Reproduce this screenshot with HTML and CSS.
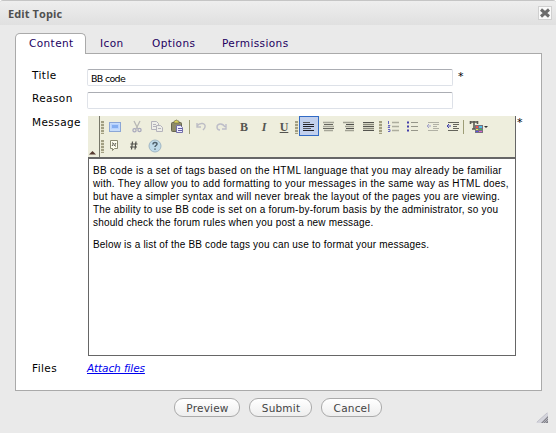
FILE: index.html
```html
<!DOCTYPE html>
<html lang="en">
<head>
<meta charset="utf-8">
<title>Edit Topic</title>
<link rel="stylesheet" href="styles.css">
</head>
<body>
<main class="dialog">
  <header class="titlebar">
    <h1>Edit Topic</h1>
    <button class="close" aria-label="Close"><svg width="12" height="12" viewBox="0 0 12 12"><path d="M2 2.5l8 7M10 2.5l-8 7" stroke="#6c6c6c" stroke-width="3"/></svg></button>
  </header>
  <nav class="tabs">
    <a class="tab active">Content</a><a class="tab icon-tab">Icon</a><a class="tab options">Options</a><a class="tab permissions">Permissions</a>
  </nav>
  <section class="panel">
    <div class="row title-row"><label for="title">Title</label><input id="title" value="BB code"><span class="star">*</span></div>
    <div class="row reason-row"><label for="reason">Reason</label><input id="reason"></div>
    <div class="row message-row">
      <label>Message</label>
      <div class="editor">
        <div class="toolbar">
          <div class="collapse"><svg width="7" height="4" viewBox="0 0 7 4"><path d="M0 3.5L3.5 0 7 3.5z" fill="#573b30"/></svg></div>
          <div class="tools">
            <div class="tool-row">
              <i class="grip"></i>
              <span class="tool first"><svg viewBox="0 0 20 20"><rect x="4.500" y="6.500" width="11" height="9" fill="#c6dcfa" stroke="#8ba6d6"/><rect x="6.500" y="8.500" width="7" height="4" fill="#84aef0" stroke="#b5d1ff"/></svg></span>
              <span class="tool cut"><svg viewBox="0 0 20 20"><path d="M7 5l4 8M13 5l-4 8" stroke="#b7b7b5" stroke-width="1.3"/><g fill="none" stroke="#aaaabd" stroke-width="1.3"><circle cx="7.500" cy="14.200" r="1.600"/><circle cx="12.500" cy="14" r="1.600"/></g></svg></span>
              <span class="tool"><svg viewBox="0 0 20 20"><g fill="#eeeee8" stroke="#b4b3bb"><path d="M4.500 5.500h5l2 2v6h-7z"/><path d="M9.500 9.500h4l2 2v4h-6z"/><path d="M6 8.500h3M6 10.500h3M11 12.500h3"/></g></svg></span>
              <span class="tool"><svg viewBox="0 0 20 20"><rect x="4.500" y="6.500" width="10" height="9" rx="1" fill="#8e8b69" stroke="#666550"/><path d="M7 7h5V5h-1.500L10 4H9L8 5H7z" fill="#ddd65f" stroke="#77724c" stroke-width=".7"/><path d="M9.500 9.500h4l2 2v5h-6z" fill="#eeeefd" stroke="#7470a9"/><path d="M11 12.500h4M11 14.500h4" stroke="#6660a8"/></svg></span>
              <i class="separator"></i>
              <span class="tool undo"><svg viewBox="0 0 20 20"><path d="M6 7v4h4M6 10c3-4 9-3 8 1 0 1-1 2-2 3" fill="none" stroke="#bdbdc5" stroke-width="1.4"/></svg></span>
              <span class="tool"><svg viewBox="0 0 20 20"><path d="M15 8v5h-4M14 11C11 6 6 8 6 11c0 2 1 3 3 3" fill="none" stroke="#bdbdc8" stroke-width="1.4"/></svg></span>
              <span class="tool letter bold">B</span><span class="tool letter italic">I</span><span class="tool letter under">U</span>
              <i class="grip mid"></i>
              <span class="tool selected"><svg viewBox="0 0 20 20"><path d="M4 6.500h7M4 12.500h8" stroke="#59595e"/><path d="M4 8.500h11M4 10.500h11M4 14.500h11" stroke="#202028"/></svg></span>
              <span class="tool"><svg viewBox="0 0 20 20"><path d="M4 6.500h11M4 10.500h11M5 14.500h9" stroke="#a5a598" stroke-width="1.6"/><path d="M5 8.500h9M4 12.500h11" stroke="#65655d"/></svg></span>
              <span class="tool"><svg viewBox="0 0 20 20"><path d="M4 6.500h11M6 10.500h9M6 14.500h9" stroke="#a0a092" stroke-width="1.3"/><path d="M7 8.500h8M7 12.500h8" stroke="#50504c"/></svg></span>
              <span class="tool"><svg viewBox="0 0 20 20"><path d="M4 6.500h11M4 10.500h11M4 14.500h11" stroke="#55554f"/><path d="M4 8.500h11M4 12.500h11" stroke="#888879" stroke-width="1.5"/></svg></span>
              <i class="grip list"></i>
              <span class="tool ordered"><svg viewBox="0 0 20 20"><path d="M5.500 5v3M5 9.500h2l-2 2h2M5 13.500h2v2H5" fill="none" stroke="#6666bf"/><path d="M9 6.500h7M9 10.500h7M9 14.500h7" stroke="#adad9e" stroke-width="1.6"/></svg></span>
              <span class="tool"><svg viewBox="0 0 20 20"><path d="M4 6.500h2M4 10.500h2M4 14.500h2" stroke="#443eaa" stroke-width="2"/><path d="M8 6.500h7M8 10.500h7M8 14.500h7" stroke="#96968a"/></svg></span>
              <span class="tool"><svg viewBox="0 0 20 20"><path d="M5 6.500h11M10 8.500h6M10 10.500h4M10 12.500h6M5 14.500h10" stroke="#b1b1a5" stroke-width="1.2"/><path d="M4 10h4M6 8l-2 2 2 2" fill="none" stroke="#a5a5c9"/></svg></span>
              <span class="tool"><svg viewBox="0 0 20 20"><path d="M5 6.500h11M10 8.500h6M10 10.500h4M10 12.500h6M5 14.500h10" stroke="#64645b" stroke-width="1.2"/><path d="M4 10h4M6 8l-2 2 2 2" fill="none" stroke="#4545aa"/></svg></span>
              <i class="separator last"></i>
              <span class="tool color"><svg viewBox="0 0 22 20"><path d="M4 6h8M8 5v8M6 13h4M4.500 5v3M11.500 5v3" stroke="#585851" stroke-width="1.6"/><rect x="9" y="9" width="8" height="8" fill="#77737c"/><path d="M10 10h2v2h-2z" fill="#ee544b"/><path d="M13 10h3v2h-3z" fill="#53bde8"/><path d="M10 13h2v1h-2z" fill="#e9e853"/><path d="M13 13h3v1h-3z" fill="#45b65b"/><path d="M10 15h2v1h-2z" fill="#5550ee"/><path d="M13 15h3v1h-3z" fill="#df60da"/><path d="M18 10h4l-2 2z" fill="#333"/></svg></span>
            </div>
            <div class="tool-row second">
              <i class="grip"></i>
              <span class="tool quote"><svg viewBox="0 0 20 20"><path d="M5.500 4.500h7v8h-3l-2 2v-2h-2z" fill="#ffffee" stroke="#89896e"/><path d="M7 10l2-3M9 10l2-3M7 7h1M10 10h1" stroke="#555548"/></svg></span>
              <span class="tool hash"><svg viewBox="0 0 20 20"><path d="M8.500 5.500l-1 8M12 5.500l-1 8M6.500 8h7M6 11h7" stroke="#4e4e49" stroke-width="1.2"/></svg></span>
              <span class="tool help"><svg viewBox="0 0 20 20"><circle cx="10" cy="10" r="6" fill="#bfdae9" stroke="#a1b7c4"/><path d="M8 8.500c0-3 4-2.500 4-.5 0 1.500-2 1.500-2 3M10 12.500v1.300" fill="none" stroke="#50616c" stroke-width="1.5"/></svg></span>
            </div>
          </div>
        </div>
        <div class="message">
          <p><span class="l1">BB code is a set of tags based on the HTML language that you may already be familiar</span><span class="l2">with. They allow you to add formatting to your messages in the same way as HTML does,</span><span class="l3">but have a simpler syntax and will never break the layout of the pages you are viewing.</span><span class="l4">The ability to use BB code is set on a forum-by-forum basis by the administrator, so you</span><span class="l5">should check the forum rules when you post a new message.</span></p>
          <p><span class="l6">Below is a list of the BB code tags you can use to format your messages.</span></p>
        </div>
      </div>
      <span class="star">*</span>
    </div>
    <div class="row files"><label>Files</label><a>Attach files</a></div>
  </section>
  <footer><button class="preview">Preview</button><button class="submit">Submit</button><button class="cancel">Cancel</button></footer>
  <svg class="resize" viewBox="0 0 12 11"><path d="M0 11L12 0v11z" fill="#d4d4dc"/><path d="M1 10L11 1" stroke="#c2c2ca"/><path d="M5 11l7-7v7z" fill="#84848c"/><path d="M7 11l5-5M9 11l3-3" stroke="#d4d4da" stroke-width=".6"/></svg>
</main>
</body>
</html>
```
FILE: styles.css
```css
* { box-sizing: border-box; }
body { margin: 0; font: 10.5px/14px "DejaVu Sans", sans-serif; color: #000; }
.dialog { position: relative; width: 556px; height: 433px; background: #eaeaea; border-top: 1px solid #c5c5c5; overflow: hidden; border-radius: 3px 3px 0 0; }
.titlebar { height: 24px; display: flex; align-items: center; justify-content: space-between; padding: 0 4px 0 8px; background: linear-gradient(#eee, #e0e0e0); }
h1 { margin: 1px 0 0; color: #505050; font: bold 11px/14px "Open Sans", "Noto Sans", sans-serif; letter-spacing: .1px; white-space: nowrap; }
.close { width: 14px; height: 14px; padding: 0; border: 1px solid #d0d0d0; background: #fafafa; display: grid; place-items: center; margin-top: -1px; }
.tabs { height: 29px; padding: 8px 0 0 15px; display: flex; position: relative; z-index: 1; }
.tab { color: #22005f; font-size: 10.5px; line-height: 21px; white-space: nowrap; letter-spacing: .4px; }
.tab.active { width: 71px; height: 21px; padding-left: 13px; border: 1px solid #aaa; border-bottom: 0; border-radius: 5px 5px 0 0; background: white; line-height: 19px; }
.icon-tab { margin-left: 14px; width: 52px; }
.options { width: 70px; }
.panel { width: 527px; height: 338px; margin: -1px 0 0 15px; border: 1px solid #aaa; background: white; padding: 15px 0 0 16px; }
.row { display: flex; }
.row > label { width: 55px; flex: none; margin-top: -1px; letter-spacing: .42px; }
.title-row { height: 23px; }
.reason-row { height: 24px; }
input { width: 366px; height: 17px; margin: 0; padding: 1px 3px 0; border: 1px solid #dde1e8; border-top-color: #abadb3; border-left-color: #e0e3e9; border-radius: 2px; font: 9.5px/13px "DejaVu Sans", sans-serif; letter-spacing: -.7px; }
.star { margin-left: 5px; margin-top: 1px; font-size: 11px; }
.message-row { height: 246px; }
.message-row .star { margin-left: 1px; margin-top: 0; }
.editor { width: 428px; height: 240px; margin: 0 0 0 1px; border-right: 1px solid #666; }
.toolbar { display: flex; height: 41px; background: #eeeedd; }
.collapse { width: 12px; border-right: 1px solid #777769; display: flex; align-items: flex-end; justify-content: center; padding: 0 2px 2px 0; }
.tools { flex: 1; }
.tool-row { display: flex; height: 21px; }
.grip { flex: none; width: 3px; height: 13px; margin: 5px 0 0 1px; background: repeating-linear-gradient(#a29f83 0 2px, #e1dfc7 2px 3px); }
.tool { width: 20px; height: 20px; flex: none; display: block; }
.tool svg { display: block; width: 20px; height: 20px; }
.tool.first, .tool.quote { margin-left: 1px; }
.tool.cut { margin-left: 2px; }
.separator { width: 1px; height: 14px; margin: 4px 1px 0 2px; background: #9d9d76; flex: none; }
.letter { color: #555550; font: bold 12px/20px "Liberation Serif", serif; text-align: center; padding-top: 1px; }
.bold { margin-left: 3px; font-weight: 900; }
.italic { font-style: italic; }
.under { text-decoration: underline; }
.grip.mid { margin-left: 1px; margin-right: 1px; }
.selected { border: 1px solid #316ac5; background: #c2d0ed; }
.selected svg { margin: -1px; }
.grip.list { margin-left: 0; margin-right: 1px; }
.separator.last { margin-left: 0; margin-right: 2px; }
.color, .color svg { width: 22px; }
.tool-row.second { height: 20px; margin-top: -1px; }
.tool-row.second .grip { margin-top: 4px; }
.hash { margin-left: -1px; }
.help { margin-left: 1px; }
.message { height: 199px; border: 1px solid #666; border-right: 0; border-top-width: 2px; background: white; padding: 5px 4px 0; font: 10px/13px "Liberation Sans", sans-serif; letter-spacing: .24px; }
.message p { margin: 0 0 9px; }
.message p span { display: block; white-space: nowrap; }
.l1 { letter-spacing: .3px; }
.l2 { letter-spacing: .25px; }
.l3 { letter-spacing: .265px; }
.l4 { letter-spacing: .21px; }
.l5 { letter-spacing: .17px; }
.l6 { letter-spacing: .185px; }
.files a { margin-top: -1px; letter-spacing: -.1px; color: #0000ee; font-style: italic; text-decoration: underline; }
footer { display: flex; margin: 7px 0 0 174px; }
footer button { height: 19px; padding: 0 0 0 1px; border: 1px solid #aaa; border-radius: 9px; background: linear-gradient(#fff, #eee); color: #444; font: 10.5px/16px "DejaVu Sans", sans-serif; letter-spacing: .2px; }
.preview { width: 66px; margin-right: 9px; }
.submit { width: 63px; margin-right: 9px; }
.cancel { width: 61px; }
.resize { position: absolute; right: 8px; bottom: 10px; width: 12px; height: 11px; }
```
